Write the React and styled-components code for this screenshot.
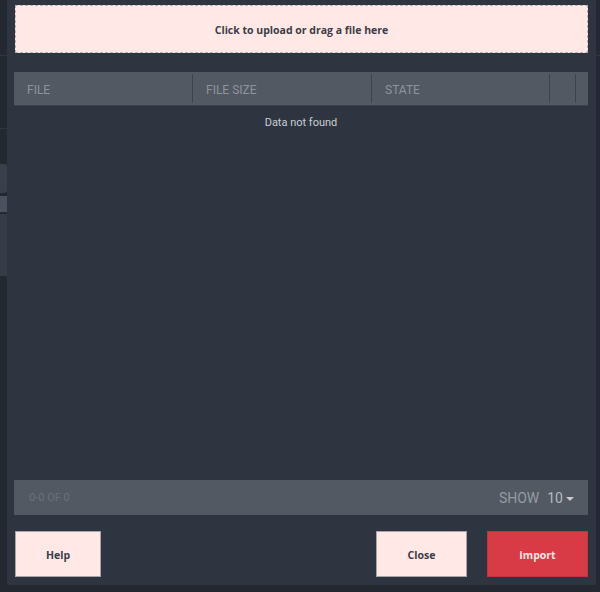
import React from "react";
import styled, { createGlobalStyle } from "styled-components";

const GlobalStyle = createGlobalStyle`
  html, body {
    margin: 0;
    padding: 0;
    background: #232831;
    font-family: Roboto, "Liberation Sans", sans-serif;
  }
`;

const Page = styled.div`
  display: flex;
  height: 592px;
  width: 600px;
  overflow: hidden;
`;

const SideStrip = styled.div`
  width: ${(p) => p.w}px;
  flex-shrink: 0;
  display: flex;
  flex-direction: column;
`;

const StripPiece = styled.div`
  height: ${(p) => p.h}px;
  margin-top: ${(p) => p.mt || 0}px;
  background: ${(p) => p.bg || "transparent"};
  border-top: ${(p) => (p.line ? "1px solid #323843" : "none")};
  border-radius: ${(p) => (p.round ? "0 3px 3px 0" : "0")};
`;

const Modal = styled.div`
  width: 589px;
  height: 585px;
  background: #2f3540;
  box-sizing: border-box;
  padding: 5px 8px 8px 7px;
  display: flex;
  flex-direction: column;
`;

const Upload = styled.div`
  margin-left: 1px;
  height: 48px;
  box-sizing: border-box;
  border: 1px dashed #b9b3b4;
  background: #ffe8e6;
  display: flex;
  align-items: center;
  justify-content: center;
  padding-top: 2px;
  font-family: "Open Sans", "Noto Sans", sans-serif;
  font-weight: 700;
  font-size: 10.5px;
  color: #3a3d45;
`;

const Table = styled.div`
  margin-top: 19px;
  flex: 1;
  display: flex;
  flex-direction: column;
`;

const HeaderRow = styled.div`
  display: grid;
  grid-template-columns: 179px 179px 178px 26px 1fr;
  height: 34px;
  background: #525963;
  border-bottom: 1px solid #3b414b;
  box-sizing: border-box;
`;

const HeadCell = styled.div`
  display: flex;
  align-items: center;
  padding: 3px 0 0 13px;
  font-size: 12px;
  color: #8e949c;
  border-right: ${(p) => (p.last ? "none" : "1px solid #3d434c")};
  margin: 2px 0;
`;

const Body = styled.div`
  flex: 1;
  padding-top: 10px;
  text-align: center;
  font-size: 11px;
  color: #c9cdd3;
`;

const Footer = styled.div`
  height: 35px;
  background: #525963;
  display: flex;
  align-items: center;
  justify-content: space-between;
  padding: 0 14px 0 15px;
`;

const Count = styled.span`
  font-size: 11px;
  color: #6a717a;
`;

const Show = styled.div`
  display: flex;
  align-items: center;
  font-size: 14px;
  color: #969ca4;
`;

const PerPage = styled.span`
  margin-left: 8px;
  color: #b6bac0;
  display: flex;
  align-items: center;
`;

const Caret = styled.span`
  margin-left: 3px;
  width: 0;
  height: 0;
  border-left: 4px solid transparent;
  border-right: 4px solid transparent;
  border-top: 4px solid #c8ccd2;
  margin-top: 3px;
`;

const Actions = styled.div`
  margin-top: 16px;
  display: flex;
  align-items: center;
  gap: 20px;
  padding-left: 1px;
`;

const Button = styled.button`
  height: 46px;
  width: ${(p) => p.w}px;
  margin-left: ${(p) => (p.push ? "auto" : "0")};
  border: 1px solid ${(p) => (p.primary ? "#c23540" : "#aaa3a4")};
  background: ${(p) => (p.primary ? "#d83b46" : "#ffe8e6")};
  color: ${(p) => (p.primary ? "#ffe8e6" : "#3a3d45")};
  font-family: "Open Sans", "Noto Sans", sans-serif;
  font-weight: 700;
  font-size: 10.5px;
  padding: 2px 0 0;
  cursor: pointer;
`;

export default function App() {
  return (
    <>
      <GlobalStyle />
      <Page>
        <SideStrip w={7}>
          <StripPiece h={55} />
          <StripPiece h={72} line />
          <StripPiece h={35} line />
          <StripPiece h={29} bg="#3a404a" round />
          <StripPiece h={16} mt={3} bg="#4a5260" />
          <StripPiece h={62} mt={2} bg="#363c46" />
        </SideStrip>
        <Modal>
          <Upload>Click to upload or drag a file here</Upload>
          <Table>
            <HeaderRow>
              <HeadCell>FILE</HeadCell>
              <HeadCell>FILE SIZE</HeadCell>
              <HeadCell>STATE</HeadCell>
              <HeadCell />
              <HeadCell last />
            </HeaderRow>
            <Body>Data not found</Body>
            <Footer>
              <Count>0-0 OF 0</Count>
              <Show>
                SHOW
                <PerPage>
                  10
                  <Caret />
                </PerPage>
              </Show>
            </Footer>
          </Table>
          <Actions>
            <Button w={86}>Help</Button>
            <Button w={91} push>
              Close
            </Button>
            <Button w={101} primary>
              Import
            </Button>
          </Actions>
        </Modal>
        <SideStrip w={4}>
          <StripPiece h={55} />
          <StripPiece h={100} line />
        </SideStrip>
      </Page>
    </>
  );
}
